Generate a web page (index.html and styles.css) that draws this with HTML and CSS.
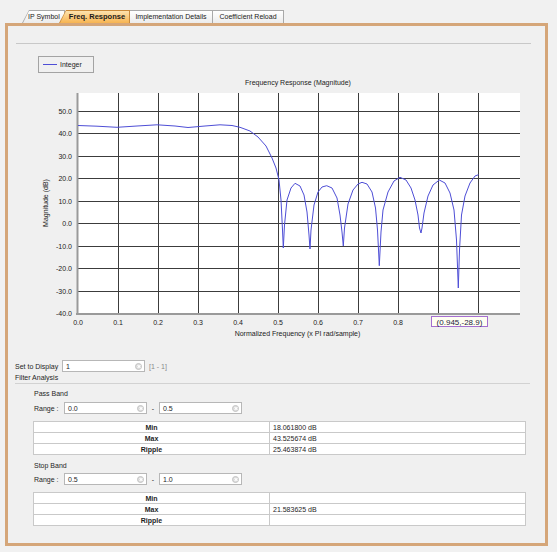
FILE: index.html
```html
<!DOCTYPE html>
<html>
<head>
<meta charset="utf-8">
<link rel="stylesheet" href="styles.css">
</head>
<body>
<div class="app">
  <div class="tabs">
    <div class="tab tab-first"><div class="tab-in">IP Symbol</div></div>
    <div class="tab tab-active"><div class="tab-in">Freq. Response</div></div>
    <div class="tab tab-plain"><div class="tab-in">Implementation Details</div></div>
    <div class="tab tab-plain"><div class="tab-in">Coefficient Reload</div></div>
  </div>
  <div class="frame">
    <div class="rule-top"></div>
    <div class="legend"><span class="legend-line"></span><span>Integer</span></div>
    <svg class="chart" width="500" height="267" viewBox="30 75 500 267" xmlns="http://www.w3.org/2000/svg">
      <text class="t" x="298" y="84.5" text-anchor="middle">Frequency Response (Magnitude)</text>
      <rect x="77" y="93" width="443" height="221" fill="#ffffff"/>
      <g stroke="#3c3c3c" stroke-width="1">
        <line x1="78" y1="111.5" x2="520" y2="111.5"/>
        <line x1="78" y1="133.5" x2="520" y2="133.5"/>
        <line x1="78" y1="156.5" x2="520" y2="156.5"/>
        <line x1="78" y1="178.5" x2="520" y2="178.5"/>
        <line x1="78" y1="201.5" x2="520" y2="201.5"/>
        <line x1="78" y1="223.5" x2="520" y2="223.5"/>
        <line x1="78" y1="246.5" x2="520" y2="246.5"/>
        <line x1="78" y1="268.5" x2="520" y2="268.5"/>
        <line x1="78" y1="291.5" x2="520" y2="291.5"/>
        <line x1="118.5" y1="93" x2="118.5" y2="313"/>
        <line x1="158.5" y1="93" x2="158.5" y2="313"/>
        <line x1="198.5" y1="93" x2="198.5" y2="313"/>
        <line x1="238.5" y1="93" x2="238.5" y2="313"/>
        <line x1="278.5" y1="93" x2="278.5" y2="313"/>
        <line x1="318.5" y1="93" x2="318.5" y2="313"/>
        <line x1="358.5" y1="93" x2="358.5" y2="313"/>
        <line x1="398.5" y1="93" x2="398.5" y2="313"/>
        <line x1="438.5" y1="93" x2="438.5" y2="313"/>
        <line x1="478.5" y1="93" x2="478.5" y2="313"/>
      </g>
      <g stroke="#9a9a9a" stroke-width="2">
        <line x1="77.5" y1="93" x2="77.5" y2="315"/>
        <line x1="76" y1="314" x2="520" y2="314"/>
      </g>
      <path fill="none" stroke="#4e4ed6" stroke-width="1" stroke-linejoin="round" d="M78,125.5 L97,126.2 L117,127.3 L137,126 L157,124.8 L175,126 L188,127.5 L205,126 L220,124.8 L232,125.5 L240,127.3 L250,131 L258,137 L266,146 L272,158 L276,168 L279,180 L281,200 L282.5,230 L283.3,248 L284.5,225 L287,200 L291,188 L295,183.3 L300,186 L304,195 L307,212 L309,235 L310,249 L311,230 L314,205 L318,192 L322,187 L326.7,185.7 L332,188 L337,198 L340,215 L342,232 L343.3,246 L344.5,228 L348,204 L353,190 L358,184 L362,182.3 L367,184 L372,192 L375.5,208 L377.5,230 L379.3,265.7 L381,232 L383,210 L388,192 L394,181 L400,177.3 L406,180 L411,188 L415,200 L418,215 L419.5,228 L421,233 L422,228 L424,213 L428,196 L433,185 L439.3,180 L445,183 L450,193 L454,210 L456.5,240 L458.3,288 L459.5,250 L461.5,215 L465,196 L470,183 L475,176 L478.5,174.7"/>
      <g class="t" text-anchor="end">
        <text x="72" y="113.5">50.0</text>
        <text x="72" y="136">40.0</text>
        <text x="72" y="158.5">30.0</text>
        <text x="72" y="181">20.0</text>
        <text x="72" y="203.5">10.0</text>
        <text x="72" y="226">0.0</text>
        <text x="72" y="248.5">-10.0</text>
        <text x="72" y="271">-20.0</text>
        <text x="72" y="293.5">-30.0</text>
        <text x="72" y="316">-40.0</text>
      </g>
      <g class="t" text-anchor="middle">
        <text x="78" y="324.5">0.0</text>
        <text x="118" y="324.5">0.1</text>
        <text x="158" y="324.5">0.2</text>
        <text x="198" y="324.5">0.3</text>
        <text x="238" y="324.5">0.4</text>
        <text x="278" y="324.5">0.5</text>
        <text x="318" y="324.5">0.6</text>
        <text x="358" y="324.5">0.7</text>
        <text x="398" y="324.5">0.8</text>
      </g>
      <text class="t" transform="translate(48,203) rotate(-90)" text-anchor="middle">Magnitude (dB)</text>
      <text class="t" x="297.5" y="336" text-anchor="middle">Normalized Frequency (x PI rad/sample)</text>
      <rect x="431.5" y="316.5" width="56" height="10" fill="#fffff2" stroke="#a56fd0" stroke-width="1"/>
      <text class="tip" x="459.5" y="325" text-anchor="middle">(0.945,-28.9)</text>
    </svg>

    <div class="row display-row">
      <span class="lbl lbl-display">Set to Display</span>
      <div class="field"><span>1</span><span class="clear"></span></div>
      <span class="hint">[1 - 1]</span>
    </div>
    <div class="section-title">Filter Analysis</div>

    <div class="band-title">Pass Band</div>
    <div class="row range-row">
      <span class="lbl lbl-range">Range :</span>
      <div class="field"><span>0.0</span><span class="clear"></span></div>
      <span class="dash">-</span>
      <div class="field"><span>0.5</span><span class="clear"></span></div>
    </div>
    <table class="stats">
      <tr><th>Min</th><td>18.061800 dB</td></tr>
      <tr><th>Max</th><td>43.525674 dB</td></tr>
      <tr><th>Ripple</th><td>25.463874 dB</td></tr>
    </table>

    <div class="band-title stop">Stop Band</div>
    <div class="row range-row stop-row">
      <span class="lbl lbl-range">Range :</span>
      <div class="field"><span>0.5</span><span class="clear"></span></div>
      <span class="dash">-</span>
      <div class="field"><span>1.0</span><span class="clear"></span></div>
    </div>
    <table class="stats">
      <tr><th>Min</th><td></td></tr>
      <tr><th>Max</th><td>21.583625 dB</td></tr>
      <tr><th>Ripple</th><td></td></tr>
    </table>
  </div>
</div>
</body>
</html>
```

FILE: styles.css
```css
html, body {
  margin: 0;
  padding: 0;
  background: #f0f0f0;
}
body {
  font-family: "Liberation Sans", Arial, sans-serif;
  font-size: 7px;
  color: #1e1e1e;
}
.app {
  padding: 10px 0 0 5px;
  width: 552px;
  height: 542px;
  background: #f1f1f1;
}
.tabs {
  display: flex;
  height: 13px;
  margin-left: 17px;
}
.tab {
  height: 13px;
  box-sizing: border-box;
  padding: 1px 1px 0 1px;
  background: #a9a9a9;
}
.tab-in {
  height: 12px;
  line-height: 12px;
  white-space: nowrap;
  background: linear-gradient(#ffffff, #ececec);
  text-align: center;
  color: #222;
}
.tab-first {
  width: 43px;
  clip-path: polygon(7px 0, 100% 0, 100% 100%, 0 100%);
}
.tab-first .tab-in {
  clip-path: polygon(6px 0, 100% 0, 100% 100%, 0 100%);
  text-align: left;
  padding-left: 5px;
}
.tab-active {
  width: 71px;
  margin-left: -6px;
  position: relative;
  z-index: 1;
  background: #c98a3a;
  clip-path: polygon(7px 0, 100% 0, 100% 100%, 0 100%);
}
.tab-active .tab-in {
  height: 12px;
  background: linear-gradient(#fde3ae, #f7b451);
  clip-path: polygon(6px 0, 100% 0, 100% 100%, 0 100%);
  font-weight: bold;
  font-size: 7.5px;
  padding-left: 5px;
  color: #1a1a1a;
}
.tab-plain {
  width: 83px;
  padding-left: 0;
}
.tab-plain:last-child {
  width: 71px;
}
.frame {
  width: 543px;
  height: 523px;
  box-sizing: border-box;
  border: 3px solid #d5a679;
  background: #f0f0f0;
  display: flex;
  flex-direction: column;
}
.rule-top {
  height: 1px;
  background: #c8c8c8;
  margin: 17px 14px 0 8px;
}
.legend {
  margin: 12px 0 0 30px;
  width: 56px;
  height: 17px;
  box-sizing: border-box;
  border: 1px solid #a3a3a3;
  display: flex;
  align-items: center;
  padding-left: 4px;
  gap: 3px;
}
.legend-line {
  width: 14px;
  height: 1px;
  background: #4e4ed6;
}
.chart {
  display: block;
  margin: 2px 0 0 22px;
}
.t {
  font-family: "Liberation Sans", Arial, sans-serif;
  font-size: 7px;
  fill: #222;
}
.tip {
  font-family: "Liberation Sans", Arial, sans-serif;
  font-size: 8px;
  fill: #1c1c3c;
}
.row {
  display: flex;
  align-items: center;
  height: 12px;
}
.display-row {
  margin: 18px 0 0 7px;
}
.lbl-display {
  width: 47px;
}
.field {
  box-sizing: border-box;
  width: 83px;
  height: 12px;
  border: 1px solid #b7b7b7;
  background: #ffffff;
  display: flex;
  align-items: center;
  justify-content: space-between;
  padding: 0 2px 0 3px;
}
.clear {
  width: 7px;
  height: 7px;
  box-sizing: border-box;
  border-radius: 50%;
  background: #dcdcdc;
  border: 1px solid #c4c4c4;
  position: relative;
}
.clear::before, .clear::after {
  content: "";
  position: absolute;
  left: 0.5px;
  top: 2px;
  width: 4px;
  height: 1px;
  background: #ffffff;
  transform: rotate(45deg);
}
.clear::after {
  transform: rotate(-45deg);
}
.hint {
  margin-left: 4px;
  color: #8a8a8a;
}
.section-title {
  margin: 1px 15px 0 7px;
  height: 10px;
  line-height: 9px;
  border-bottom: 1px solid #d2d2d2;
}
.band-title {
  margin: 5px 0 0 26px;
  height: 10px;
  line-height: 10px;
}
.band-title.stop {
  margin-top: 6px;
}
.range-row {
  margin: 3px 0 0 26px;
}
.range-row.stop-row {
  margin-top: 2px;
}
.lbl-range {
  width: 30px;
}
.dash {
  width: 12px;
  text-align: center;
}
.stats {
  margin: 7px 0 0 25px;
  width: 493px;
  border-collapse: collapse;
  background: #ffffff;
  font-size: 7px;
}
.stats th, .stats td {
  border: 1px solid #c9c9c9;
  height: 10px;
  padding: 0;
  line-height: 9px;
}
.stats th {
  width: 235px;
  font-weight: bold;
  text-align: center;
}
.stats td {
  padding-left: 3px;
  text-align: left;
}
```
